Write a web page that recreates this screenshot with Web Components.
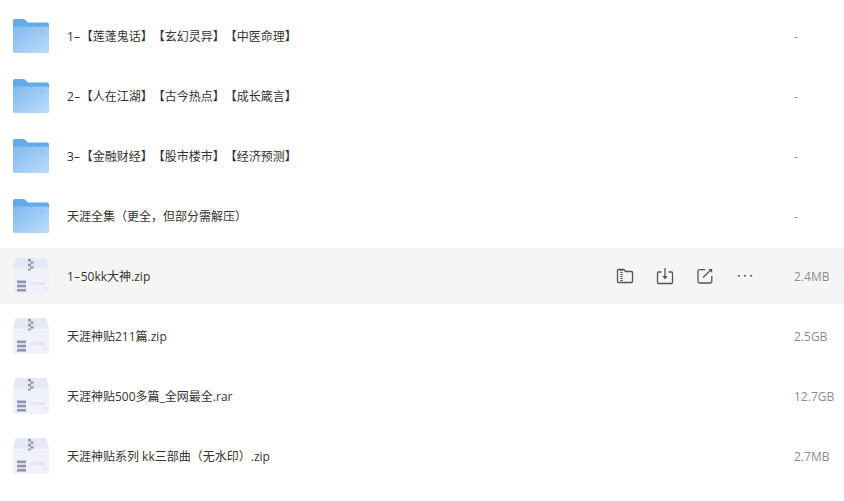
<!DOCTYPE html>
<html>
<head>
<meta charset="utf-8">
<style>
html, body { margin: 0; padding: 0; background: #fff; overflow: hidden; }
body { font-family: "Open Sans", "Noto Sans CJK SC", sans-serif; }
</style>
</head>
<body>
<file-list>
  <file-row type="folder" name="1-【莲蓬鬼话】【玄幻灵异】【中医命理】" size="-"></file-row>
  <file-row type="folder" name="2-【人在江湖】【古今热点】【成长箴言】" size="-"></file-row>
  <file-row type="folder" name="3-【金融财经】【股市楼市】【经济预测】" size="-"></file-row>
  <file-row type="folder" name="天涯全集（更全，但部分需解压）" size="-"></file-row>
  <file-row type="zip" name="1-50kk大神.zip" size="2.4MB" active></file-row>
  <file-row type="zip" name="天涯神贴211篇.zip" size="2.5GB"></file-row>
  <file-row type="zip" name="天涯神贴500多篇_全网最全.rar" size="12.7GB"></file-row>
  <file-row type="zip" name="天涯神贴系列 kk三部曲（无水印）.zip" size="2.7MB"></file-row>
</file-list>
<script>
const folderIcon = `
<svg width="36" height="34" viewBox="0 0 36 34">
  <defs>
    <linearGradient id="f" x1="0" y1="0" x2="1" y2="1">
      <stop offset="0" stop-color="#80b9ef"/>
      <stop offset="1" stop-color="#bcdcfa"/>
    </linearGradient>
  </defs>
  <path d="M0 2a2 2 0 0 1 2-2h8.500a2 2 0 0 1 1.500.7L15 3.500h19a2 2 0 0 1 2 2V32a1.500 1.500 0 0 1-1.500 1.500H1.500A1.500 1.500 0 0 1 0 32z" fill="#62aaea"/>
  <path d="M0 7.500h34a2 2 0 0 1 2 2V32a1.500 1.500 0 0 1-1.500 1.500H1.500A1.500 1.500 0 0 1 0 32z" fill="url(#f)"/>
  <rect x="27" y="11" width="4.500" height="1" fill="#8ec0ec"/>
  <rect x="27" y="13.500" width="4.500" height="1" fill="#8ec0ec"/>
</svg>`

const zipIcon = `
<svg width="36" height="36" viewBox="0 0 36 36">
  <path d="M3.500 0h29a1 1 0 0 1 1 .7L36 10v24a2 2 0 0 1-2 2H2a2 2 0 0 1-2-2V10L2.500.7a1 1 0 0 1 1-.7z" fill="#e6e8f5"/>
  <path d="M0 10.500h36V34a2 2 0 0 1-2 2H2a2 2 0 0 1-2-2z" fill="#f0f1fa"/>
  <g fill="#8f97b5">
    <rect x="15" y="1" width="3" height="2.400"/><rect x="17.500" y="3.400" width="3" height="2.400"/>
    <rect x="15" y="5.800" width="3" height="2.400"/><rect x="17.500" y="8.200" width="3" height="2.400"/>
    <rect x="15" y="10.600" width="3" height="1.800"/>
    <rect x="4" y="22.500" width="9" height="2.700"/><rect x="4" y="26.700" width="9" height="2.700"/><rect x="4" y="30.900" width="9" height="2.700"/>
  </g>
  <g fill="#d6d9e8" font-size="3.600" font-family="Liberation Sans, sans-serif">
    <text x="17" y="27">ZIP/RAR/</text>
    <text x="30" y="32">TZ</text>
  </g>
</svg>`

const actionIcons = `
<svg width="20" height="20" viewBox="0 0 20 20" fill="none" stroke="#555" stroke-width="1.300">
  <path d="M2.500 4.500a1 1 0 0 1 1-1h5.300l1.800 2h5.900a1 1 0 0 1 1 1v9a1 1 0 0 1-1 1H3.500a1 1 0 0 1-1-1z"/>
  <path d="M6.500 4v12.500" stroke-dasharray="1 1" stroke-width="2.400"/>
</svg>
<svg width="20" height="20" viewBox="0 0 20 20" fill="none" stroke="#555" stroke-width="1.300">
  <path d="M6.500 6H3.500a1 1 0 0 0-1 1v9.500a1 1 0 0 0 1 1h13a1 1 0 0 0 1-1V7a1 1 0 0 0-1-1h-3"/>
  <path d="M10 2v9"/>
  <path d="M7.300 10h5.400L10 13.500z" fill="#555" stroke="none"/>
</svg>
<svg width="20" height="20" viewBox="0 0 20 20" fill="none" stroke="#555" stroke-width="1.300">
  <path d="M10 3.700H4.500a1.500 1.500 0 0 0-1.500 1.500v10.300a1.500 1.500 0 0 0 1.500 1.500h10.800a1.500 1.500 0 0 0 1.500-1.500V10"/>
  <path d="M8 11.500L15 4.700"/>
  <path d="M13.300 3h3.900v3.900z" fill="#555" stroke="none"/>
</svg>
<svg width="20" height="20" viewBox="0 0 20 20" fill="#555">
  <circle cx="3.800" cy="9.700" r="1"/><circle cx="10" cy="9.700" r="1"/><circle cx="16.200" cy="9.700" r="1"/>
</svg>`

class FileList extends HTMLElement {
    constructor() {
        super()
        this.attachShadow({ mode: "open" }).innerHTML = `
        <style>
        :host{
            display: flex;
            flex-direction: column;
            gap: 4px;
            padding-top: 8px;
        }
        </style>
        <slot></slot>
        `
    }
}

class FileRow extends HTMLElement {
    constructor() {
        super()
        const type = this.getAttribute('type')
        const actions = this.hasAttribute('active') ? actionIcons : ''
        // the hyphen is wider in the reference font
        const name = this.getAttribute('name').replace('-', '<span class="dash">-</span>')
        this.attachShadow({ mode: "open" }).innerHTML = `
        <style>
        :host{
            display: flex;
            align-items: center;
            height: 56px;
            padding-left: 13px;
            color: #333;
            font-size: 12px;
            text-spacing-trim: space-all;
        }
        :host([active]){
            background: #f5f5f5;
        }
        .icon{
            width: 36px;
            height: 36px;
            display: flex;
            align-items: center;
            margin-right: 18px;
        }
        .name{
            flex: 1;
            white-space: nowrap;
            line-height: 16px;
            padding-top: 2px;
        }
        .dash{
            display: inline-block;
            margin: 0 1.5px;
            transform: scaleX(1.7);
        }
        .actions{
            display: flex;
            gap: 20px;
            margin-right: 39px;
        }
        .actions svg{
            display: block;
        }
        .size{
            width: 50px;
            color: #8c8c8c;
            line-height: 16px;
            padding-top: 2px;
        }
        </style>
        <div class="icon">${type === 'folder' ? folderIcon : zipIcon}</div>
        <div class="name">${name}</div>
        <div class="actions">${actions}</div>
        <div class="size">${this.getAttribute('size')}</div>
        `
    }
}

customElements.define('file-list', FileList)
customElements.define('file-row', FileRow)
</script>
</body>
</html>
